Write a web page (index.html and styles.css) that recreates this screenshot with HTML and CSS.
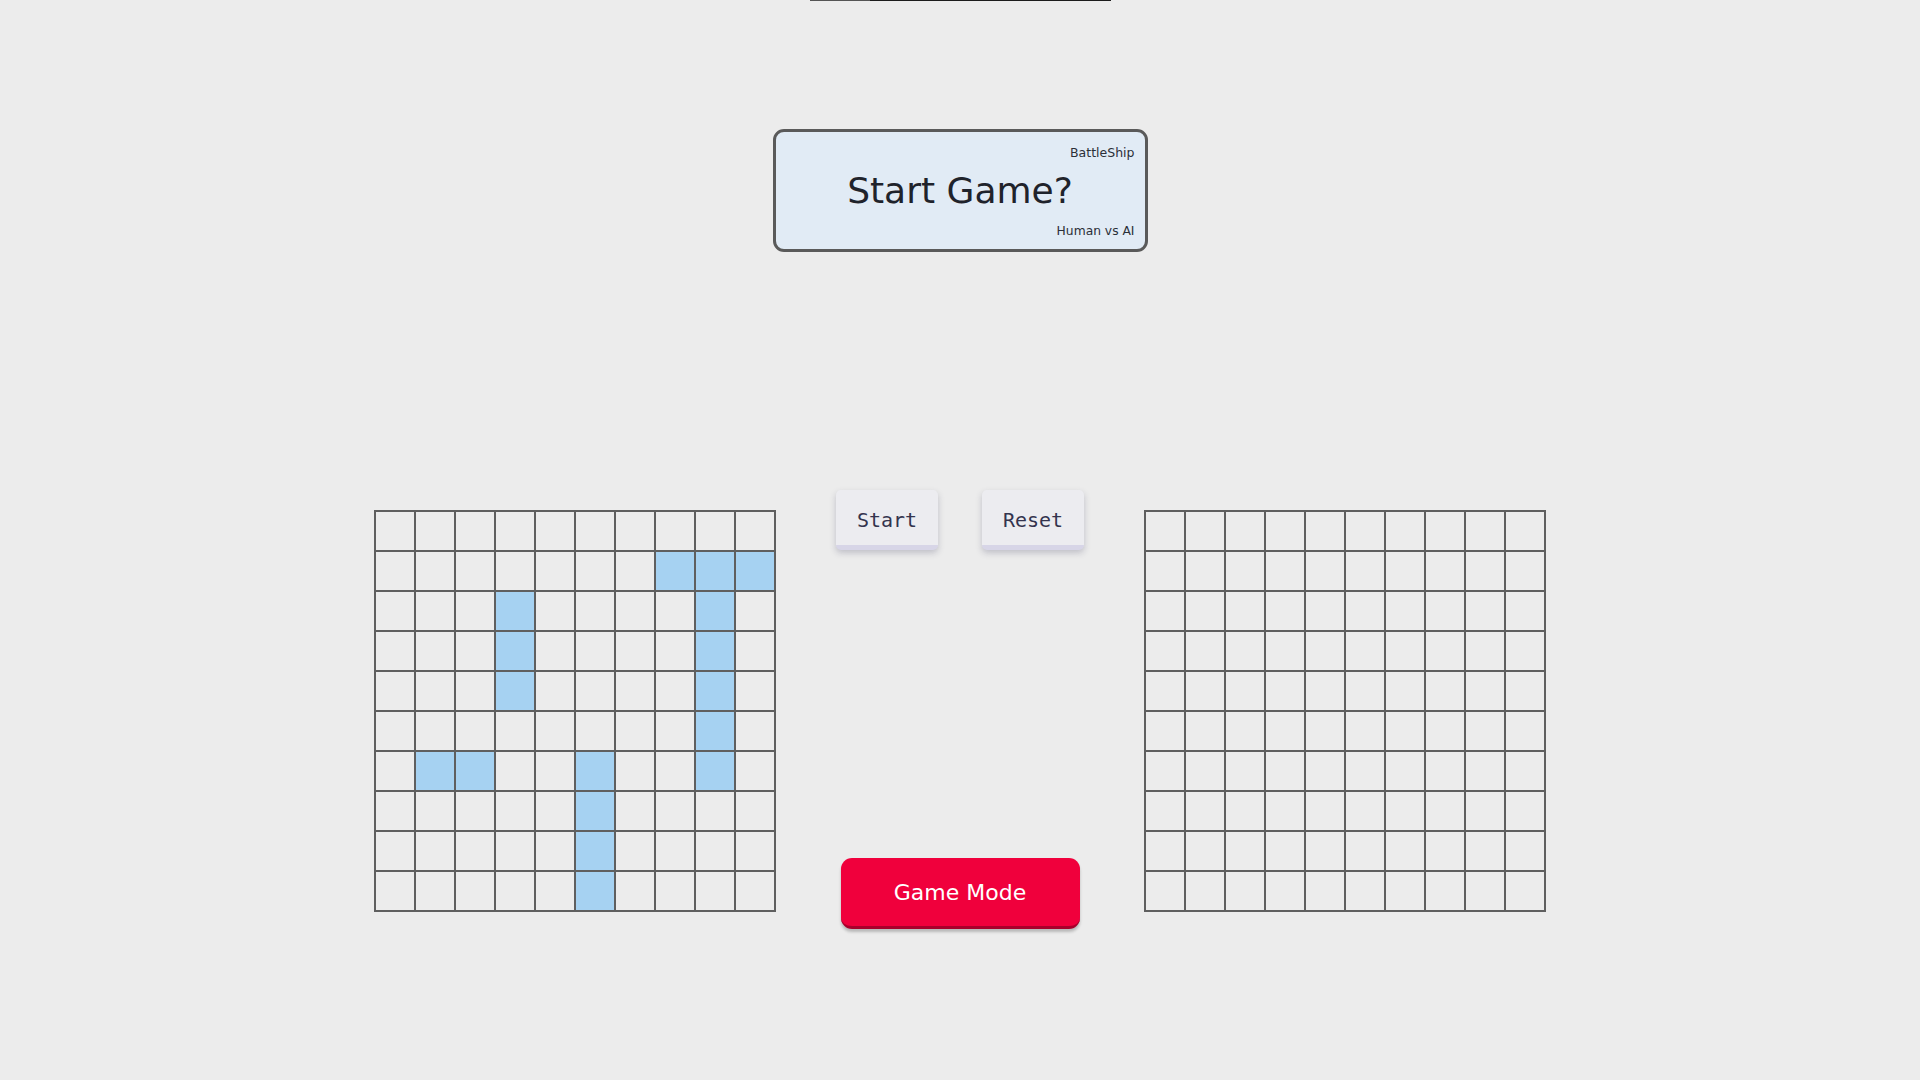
FILE: index.html
```html
<!DOCTYPE html>
<html lang="en">
<head>
<meta charset="utf-8">
<title>BattleShip</title>
<link rel="stylesheet" href="styles.css">
</head>
<body>
<div class="topbar"><span class="topbar-done"></span></div>
<header class="card">
  <div class="card-brand">BattleShip</div>
  <h1 class="card-title">Start Game?</h1>
  <div class="card-mode">Human vs AI</div>
</header>
<main class="arena">
  <div class="board" id="player">
    <div class="cell"></div><div class="cell"></div><div class="cell"></div><div class="cell"></div><div class="cell"></div><div class="cell"></div><div class="cell"></div><div class="cell"></div><div class="cell"></div><div class="cell"></div>
    <div class="cell"></div><div class="cell"></div><div class="cell"></div><div class="cell"></div><div class="cell"></div><div class="cell"></div><div class="cell"></div><div class="cell ship"></div><div class="cell ship"></div><div class="cell ship"></div>
    <div class="cell"></div><div class="cell"></div><div class="cell"></div><div class="cell ship"></div><div class="cell"></div><div class="cell"></div><div class="cell"></div><div class="cell"></div><div class="cell ship"></div><div class="cell"></div>
    <div class="cell"></div><div class="cell"></div><div class="cell"></div><div class="cell ship"></div><div class="cell"></div><div class="cell"></div><div class="cell"></div><div class="cell"></div><div class="cell ship"></div><div class="cell"></div>
    <div class="cell"></div><div class="cell"></div><div class="cell"></div><div class="cell ship"></div><div class="cell"></div><div class="cell"></div><div class="cell"></div><div class="cell"></div><div class="cell ship"></div><div class="cell"></div>
    <div class="cell"></div><div class="cell"></div><div class="cell"></div><div class="cell"></div><div class="cell"></div><div class="cell"></div><div class="cell"></div><div class="cell"></div><div class="cell ship"></div><div class="cell"></div>
    <div class="cell"></div><div class="cell ship"></div><div class="cell ship"></div><div class="cell"></div><div class="cell"></div><div class="cell ship"></div><div class="cell"></div><div class="cell"></div><div class="cell ship"></div><div class="cell"></div>
    <div class="cell"></div><div class="cell"></div><div class="cell"></div><div class="cell"></div><div class="cell"></div><div class="cell ship"></div><div class="cell"></div><div class="cell"></div><div class="cell"></div><div class="cell"></div>
    <div class="cell"></div><div class="cell"></div><div class="cell"></div><div class="cell"></div><div class="cell"></div><div class="cell ship"></div><div class="cell"></div><div class="cell"></div><div class="cell"></div><div class="cell"></div>
    <div class="cell"></div><div class="cell"></div><div class="cell"></div><div class="cell"></div><div class="cell"></div><div class="cell ship"></div><div class="cell"></div><div class="cell"></div><div class="cell"></div><div class="cell"></div>
  </div>
  <div class="controls">
    <div class="btn-row">
      <button class="btn-soft">Start</button>
      <button class="btn-soft">Reset</button>
    </div>
    <button class="btn-mode">Game Mode</button>
  </div>
  <div class="board" id="enemy">
    <div class="cell"></div><div class="cell"></div><div class="cell"></div><div class="cell"></div><div class="cell"></div><div class="cell"></div><div class="cell"></div><div class="cell"></div><div class="cell"></div><div class="cell"></div>
    <div class="cell"></div><div class="cell"></div><div class="cell"></div><div class="cell"></div><div class="cell"></div><div class="cell"></div><div class="cell"></div><div class="cell"></div><div class="cell"></div><div class="cell"></div>
    <div class="cell"></div><div class="cell"></div><div class="cell"></div><div class="cell"></div><div class="cell"></div><div class="cell"></div><div class="cell"></div><div class="cell"></div><div class="cell"></div><div class="cell"></div>
    <div class="cell"></div><div class="cell"></div><div class="cell"></div><div class="cell"></div><div class="cell"></div><div class="cell"></div><div class="cell"></div><div class="cell"></div><div class="cell"></div><div class="cell"></div>
    <div class="cell"></div><div class="cell"></div><div class="cell"></div><div class="cell"></div><div class="cell"></div><div class="cell"></div><div class="cell"></div><div class="cell"></div><div class="cell"></div><div class="cell"></div>
    <div class="cell"></div><div class="cell"></div><div class="cell"></div><div class="cell"></div><div class="cell"></div><div class="cell"></div><div class="cell"></div><div class="cell"></div><div class="cell"></div><div class="cell"></div>
    <div class="cell"></div><div class="cell"></div><div class="cell"></div><div class="cell"></div><div class="cell"></div><div class="cell"></div><div class="cell"></div><div class="cell"></div><div class="cell"></div><div class="cell"></div>
    <div class="cell"></div><div class="cell"></div><div class="cell"></div><div class="cell"></div><div class="cell"></div><div class="cell"></div><div class="cell"></div><div class="cell"></div><div class="cell"></div><div class="cell"></div>
    <div class="cell"></div><div class="cell"></div><div class="cell"></div><div class="cell"></div><div class="cell"></div><div class="cell"></div><div class="cell"></div><div class="cell"></div><div class="cell"></div><div class="cell"></div>
    <div class="cell"></div><div class="cell"></div><div class="cell"></div><div class="cell"></div><div class="cell"></div><div class="cell"></div><div class="cell"></div><div class="cell"></div><div class="cell"></div><div class="cell"></div>
  </div>
</main>
</body>
</html>
```

FILE: styles.css
```css
* { box-sizing: border-box; }
html, body {
  margin: 0;
  padding: 0;
  background: #ececec;
  font-family: "DejaVu Sans", "Noto Sans", sans-serif;
}
body {
  display: flex;
  flex-direction: column;
  align-items: center;
  min-height: 1080px;
}
.topbar {
  width: 301px;
  height: 1px;
  background: #1c1c1c;
  display: flex;
}
.topbar-done {
  width: 60px;
  height: 1px;
  background: #555555;
}
.card {
  margin-top: 128px;
  width: 375px;
  height: 123px;
  border: 3px solid #5a5a5a;
  border-radius: 11px;
  background: #e1ebf5;
  padding: 13px 10px 10px 10px;
  display: flex;
  flex-direction: column;
  color: #222831;
}
.card-brand {
  text-align: right;
  font-size: 12.5px;
  line-height: 16px;
  color: #2b2f38;
}
.card-title {
  margin: 10px 0 0 0;
  text-align: center;
  font-weight: 400;
  font-size: 36px;
  line-height: 40px;
  color: #1f232b;
}
.card-mode {
  margin-top: auto;
  text-align: right;
  font-size: 12.3px;
  line-height: 16px;
  color: #2b2f38;
}
.arena {
  margin-top: 238px;
  display: flex;
  align-items: center;
}
.board {
  display: grid;
  grid-template-columns: repeat(10, 40px);
  grid-template-rows: repeat(10, 40px);
  border: 1px solid #5f5f5f;
  width: 402px;
  height: 402px;
}
.cell {
  border: 1px solid #5f5f5f;
  background: #ececec;
}
.cell.ship { background: #a6d2f2; }
.controls {
  width: 368px;
  height: 442px;
  display: flex;
  flex-direction: column;
  align-items: center;
  justify-content: space-between;
}
.btn-row {
  display: flex;
  gap: 44px;
}
.btn-soft {
  width: 102px;
  height: 60px;
  border: none;
  border-radius: 5px;
  background: #ececf0;
  border-bottom: 5px solid #d7d5e7;
  box-shadow: 0 3px 6px rgba(60, 60, 90, 0.25);
  font-family: "DejaVu Sans Mono", monospace;
  font-size: 20px;
  color: #34344e;
  padding: 4px 0 0 0;
  margin-bottom: 2px;
}
.btn-mode {
  width: 239px;
  height: 71px;
  border: none;
  border-radius: 11px;
  background: #f0003c;
  border-bottom: 3px solid #a8002b;
  box-shadow: 0 3px 3px rgba(0, 0, 0, 0.22);
  color: #ffffff;
  font-family: "DejaVu Sans", "Noto Sans", sans-serif;
  font-size: 22px;
  padding: 0;
  margin-bottom: 3px;
}
```
